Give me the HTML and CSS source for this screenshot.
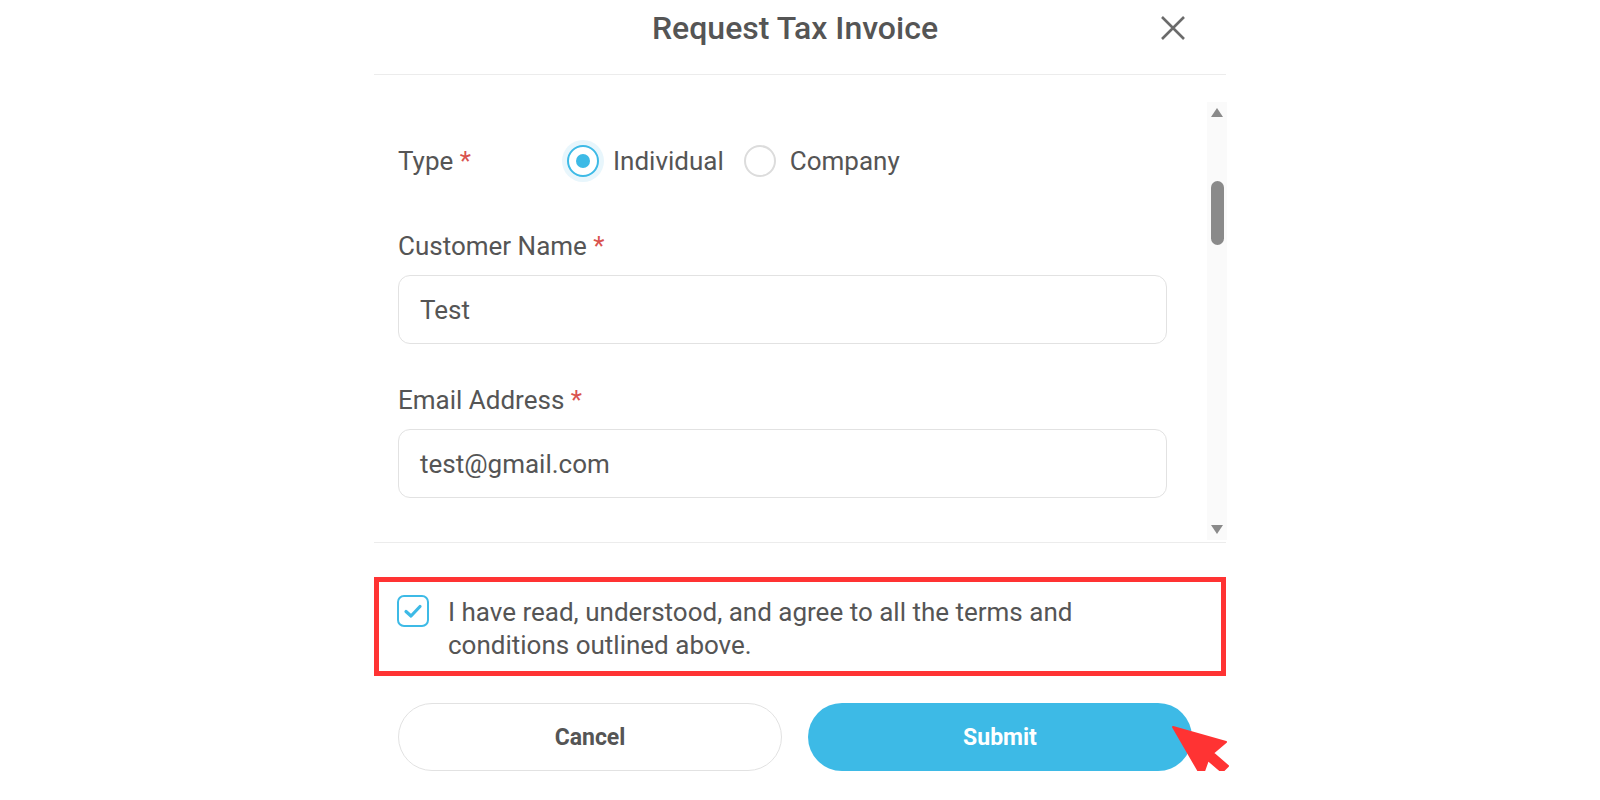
FILE: index.html
```html
<!DOCTYPE html>
<html>
<head>
<meta charset="utf-8">
<title>Request Tax Invoice</title>
<link rel="stylesheet" href="styles.css">
</head>
<body>
<div class="dialog">
  <div class="header">
    <div class="spacer"></div>
    <h1 class="title">Request Tax Invoice</h1>
    <div class="close-wrap">
      <button class="close" aria-label="Close">
        <svg width="24" height="24" viewBox="0 0 24 24"><path d="M1 1 L23 23 M23 1 L1 23" stroke="#6b6b6b" stroke-width="2.6" fill="none"/></svg>
      </button>
    </div>
  </div>

  <div class="scroll-area">
    <div class="form">
      <div class="type-row">
        <span class="label type-label">Type <span class="req">*</span></span>
        <label class="radio checked">
          <span class="halo"><span class="ring"><span class="dot"></span></span></span>
          <span class="radio-text">Individual</span>
        </label>
        <label class="radio">
          <span class="halo"><span class="ring"></span></span>
          <span class="radio-text">Company</span>
        </label>
      </div>

      <div class="field field-first">
        <div class="label">Customer Name <span class="req">*</span></div>
        <div class="input">Test</div>
      </div>

      <div class="field field-second">
        <div class="label">Email Address <span class="req">*</span></div>
        <div class="input">test@gmail.com</div>
      </div>
    </div>
    <div class="scrollbar">
      <div class="arrow up"></div>
      <div class="track"><div class="thumb"></div></div>
      <div class="arrow down"></div>
    </div>
  </div>

  <div class="footer">
    <div class="agree">
      <span class="checkbox">
        <svg width="20" height="16" viewBox="0 0 20 16"><path d="M3 8.5 L8 13 L17 3.5" stroke="#3dbae6" stroke-width="3.2" fill="none" stroke-linecap="round" stroke-linejoin="round"/></svg>
      </span>
      <p class="agree-text">I have read, understood, and agree to all the terms and conditions outlined above.</p>
    </div>
    <div class="buttons">
      <button class="btn cancel">Cancel</button>
      <button class="btn submit">Submit</button>
    </div>
  </div>

  <svg class="cursor" width="60" height="56" viewBox="0 0 60 56">
    <path d="M2 1 L55 16 L42 27 L57 40 L51 46 L37 34 L31 51 Z" fill="#ff3333" stroke="#ff3333" stroke-width="2" stroke-linejoin="round"/>
  </svg>
</div>
</body>
</html>
```

FILE: styles.css
```css
* { box-sizing: border-box; }

html, body {
  margin: 0;
  padding: 0;
  background: #ffffff;
}

body {
  font-family: Roboto, "Noto Sans", "Liberation Sans", sans-serif;
  color: #555555;
}

.dialog {
  position: relative;
  width: 852px;
  margin: 0 auto;
}

.header {
  display: grid;
  grid-template-columns: 1fr auto 1fr;
  align-items: center;
  height: 56px;
  margin-bottom: 18px;
}

.title {
  margin: 0;
  font-size: 32px;
  font-weight: 500;
  color: #555555;
  transform: translateX(-5px);
}

.close-wrap {
  display: flex;
  justify-content: flex-end;
  padding-right: 41px;
}

.close {
  border: 0;
  background: transparent;
  padding: 0;
  width: 24px;
  height: 24px;
  display: flex;
  cursor: pointer;
}

.scroll-area {
  display: flex;
  height: 469px;
  border-top: 1px solid #ececec;
  border-bottom: 1px solid #ececec;
}

.form {
  flex: 1;
  padding: 65px 40px 0 24px;
}

.label {
  font-size: 26px;
  line-height: 32px;
  color: #555555;
}

.req {
  color: #d9534f;
}

.type-row {
  display: flex;
  align-items: center;
  height: 42px;
}

.type-label {
  width: 164px;
}

.radio {
  display: flex;
  align-items: center;
  font-size: 26px;
  color: #555555;
}

.radio + .radio {
  margin-left: 15px;
}

.halo {
  width: 42px;
  height: 42px;
  border-radius: 50%;
  display: flex;
  align-items: center;
  justify-content: center;
}

.radio.checked .halo {
  background: #e8f6fc;
}

.ring {
  width: 32px;
  height: 32px;
  border-radius: 50%;
  border: 2px solid #dcdcdc;
  background: #fff;
  display: flex;
  align-items: center;
  justify-content: center;
}

.radio.checked .ring {
  border-color: #3dbae6;
}

.dot {
  width: 14px;
  height: 14px;
  border-radius: 50%;
  background: #3dbae6;
}

.radio-text {
  margin-left: 9px;
}

.field-first {
  margin-top: 48px;
}

.field-second {
  margin-top: 40px;
}

.field .label {
  margin-bottom: 13px;
}

.input {
  height: 69px;
  border: 1px solid #e2e2e2;
  border-radius: 12px;
  padding: 0 21px;
  display: flex;
  align-items: center;
  font-size: 26px;
  color: #555555;
}

.scrollbar {
  width: 20px;
  margin-right: -1px;
  margin-top: 27px;
  margin-bottom: 2px;
  background: #fafafa;
  display: flex;
  flex-direction: column;
  align-items: center;
}

.arrow {
  width: 0;
  height: 0;
  border-left: 6px solid transparent;
  border-right: 6px solid transparent;
}

.arrow.up {
  margin-top: 6px;
  border-bottom: 9px solid #8a8a8a;
}

.arrow.down {
  margin-bottom: 6px;
  border-top: 9px solid #8a8a8a;
}

.track {
  flex: 1;
  width: 100%;
  padding-top: 64px;
  display: flex;
  justify-content: center;
}

.thumb {
  width: 13px;
  height: 64px;
  border-radius: 7px;
  background: #8a8a8a;
}

.footer {
  padding-top: 34px;
}

.agree {
  display: flex;
  align-items: flex-start;
  border: 5px solid #ff3333;
  height: 99px;
  padding: 13px 0 0 18px;
}

.checkbox {
  flex: none;
  width: 32px;
  height: 32px;
  border: 2.5px solid #3dbae6;
  border-radius: 7px;
  display: flex;
  align-items: center;
  justify-content: center;
}

.agree-text {
  margin: 1px 0 0 19px;
  font-size: 26px;
  line-height: 33px;
  color: #555555;
  max-width: 700px;
}

.buttons {
  display: flex;
  gap: 26px;
  padding: 27px 0 0 24px;
}

.btn {
  width: 384px;
  height: 68px;
  border-radius: 34px;
  font-family: Roboto, "Noto Sans", "Liberation Sans", sans-serif;
  font-size: 23px;
  font-weight: 700;
  cursor: pointer;
}

.cancel {
  background: #ffffff;
  border: 1px solid #e2e2e2;
  color: #555555;
}

.submit {
  background: #3dbae6;
  border: 0;
  color: #ffffff;
}

.cursor {
  position: absolute;
  left: 797px;
  top: 726px;
}
```
